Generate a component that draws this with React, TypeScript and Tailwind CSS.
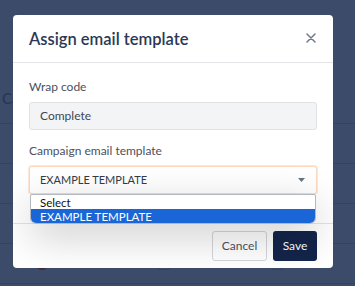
import React from "react";

export default function App() {
  const font = { fontFamily: "Lato, 'Noto Sans', sans-serif" };
  return (
    <div className="relative w-[355px] h-[286px] overflow-hidden bg-[#3b4b69]" style={font}>
      {/* background page (dimmed) */}
      <div className="flex flex-col">
        <div className="h-[124px] border-b border-[#34435f] flex items-end pb-[14px]">
          <span className="ml-[2px] text-[15px] text-[#27344f]">Ca</span>
        </div>
        <div className="h-[40px] border-b border-[#34435f]" />
        <div className="h-[40px] border-b border-[#34435f]" />
        <div className="h-[40px] border-b border-[#34435f]" />
        <div className="h-[40px] border-b border-[#34435f] flex items-center">
          <div className="ml-[36px] w-[12px] h-[12px] rounded-full bg-[#3a2f3a]" />
          <div className="ml-[110px] w-[12px] h-[12px] rounded-[2px] border border-[#33425e]" />
          <div className="ml-[102px] w-[12px] h-[12px] rounded-[2px] border border-[#33425e]" />
        </div>
      </div>

      {/* modal */}
      <div className="absolute left-[13px] top-[15px] w-[320px] h-[253px] bg-white rounded-[4px] flex flex-col overflow-hidden">
        <div className="h-[48px] shrink-0 border-b border-[#e2e4e8] flex items-center justify-between pl-[16px] pr-[17px]">
          <span className="text-[16.5px] font-semibold text-[#2b3855] leading-none pt-[2px]">Assign email template</span>
          <svg width="10" height="10" viewBox="0 0 10 10" className="mt-[-2px]">
            <path d="M1 1 L9 9 M9 1 L1 9" stroke="#707889" strokeWidth="1.5" strokeLinecap="round" />
          </svg>
        </div>
        <div className="relative flex flex-col px-[16px] pt-[16px] h-[160px] shrink-0">
          <label className="text-[12px] leading-[16px] text-[#4a5161]">Wrap code</label>
          <div className="mt-[7px] h-[28px] rounded-[3px] border border-[#e0e2e6] bg-[#f3f4f6] flex items-center pl-[10px] text-[12px] text-[#3f4656]">
            Complete
          </div>
          <label className="mt-[13px] text-[12px] leading-[16px] text-[#4a5161]">Campaign email template</label>
          <div className="relative mt-[7px]">
            <div className="h-[28px] rounded-[3px] border border-[#fbd9bf] shadow-[0_0_0_1px_#fde8d8] bg-white flex items-center justify-between pl-[10px] pr-[11px] text-[11px] text-[#333a48]">
              <span>EXAMPLE TEMPLATE</span>
              <svg width="7" height="4" viewBox="0 0 7 4">
                <path d="M0 0 L7 0 L3.5 4 Z" fill="#6b7280" />
              </svg>
            </div>
            <div className="absolute left-[1px] right-[1px] top-[28px] z-10 bg-white border border-[#b4b8c0] rounded-b-[6px] rounded-t-[2px] overflow-hidden shadow-[0_12px_40px_rgba(0,0,0,0.22)] text-[11.5px] leading-[13px]">
              <div className="pl-[9px] h-[14px] pt-[1px] text-[#111]">Select</div>
              <div className="pl-[9px] h-[14px] pt-[1px] bg-[#1a66d6] text-white">EXAMPLE TEMPLATE</div>
            </div>
          </div>
        </div>
        <div className="border-t border-[#e2e4e8] flex justify-end gap-[6px] pt-[7px] pr-[16px]">
          <button className="w-[55px] h-[30px] rounded-[3px] border border-[#d4d6da] text-[12px] text-[#4a5161] bg-white">Cancel</button>
          <button className="w-[44px] h-[30px] rounded-[3px] bg-[#13254a] text-[12px] text-white">Save</button>
        </div>
      </div>
    </div>
  );
}
